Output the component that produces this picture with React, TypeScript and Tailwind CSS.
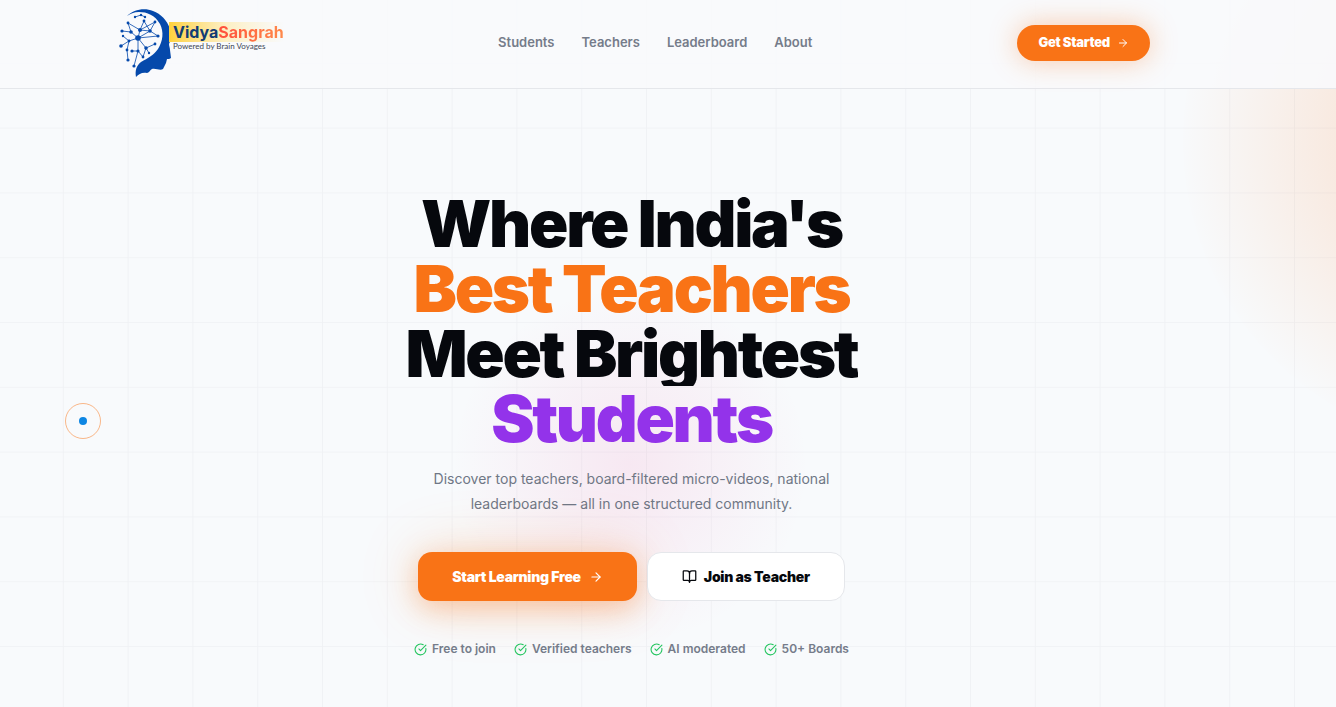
import { ArrowRight, BookOpen, CircleCheckBig } from 'lucide-react';

const navLinks = [
  { label: 'Students', href: '#students' },
  { label: 'Teachers', href: '#teachers' },
  { label: 'Leaderboard', href: '#leaderboard' },
  { label: 'About', href: '#about' },
];

const headline = [
  { text: "Where India's", color: 'text-[#06080d]' },
  { text: 'Best Teachers', color: 'text-[#f97316]' },
  { text: 'Meet Brightest', color: 'text-[#06080d]' },
  { text: 'Students', color: 'text-[#9333ea]' },
];

const perks = ['Free to join', 'Verified teachers', 'AI moderated', '50+ Boards'];

// circuit nodes inside the head: x, y, radius
const nodes = [
  [18, 10, 1.2], [24, 8, 1.2], [28, 10, 1.2], [11, 16, 1.4], [5, 24, 1.6], [14, 25, 1.8], [23, 23, 2],
  [27, 14, 1.4], [38, 15, 1.4], [33, 24, 1.8], [41, 29, 1.6], [21, 31, 2.8], [12, 34, 1.4],
  [6, 29, 1.2], [4, 39, 1.8], [10, 43, 1.4], [15, 44, 1.6], [21, 44, 1.6], [29, 41, 1.8],
  [38, 37, 1.4], [26, 50, 1.4], [17, 59, 1.6], [11, 53, 1.6], [32, 46, 1.2],
];

const links = [
  [0, 1], [1, 2], [3, 6], [3, 5], [4, 5], [5, 11], [6, 11], [6, 7], [6, 9], [7, 9], [8, 9], [9, 10],
  [9, 11], [11, 12], [12, 13], [12, 14], [11, 17], [11, 18], [18, 19], [10, 11], [15, 12], [16, 17],
  [17, 20], [17, 21], [15, 22], [18, 20], [18, 23], [6, 8],
];

function Logo() {
  return (
    <a href="#home" className="flex w-[180px] items-center pl-1" aria-label="VidyaSangrah home">
      <svg viewBox="0 0 56 72" className="h-[72px] w-14 shrink-0" aria-hidden="true">
        <path
          d="M10 9C16 3 27 0 36 4c8 3 14 9 17 18 2 6 1 11-1 15 0 2 1 4 1 6l1 8c-1 1-3 1-4 1l-1 4-1 2-2 4c-3 2-7-1-11 0-2 1-3 4-5 4-5-1-8 1-11 4-1-6 0-11 5-15 7-4 13-7 17-13 5-8 6-17 2-25C38 8 30 5 22 5c-5 0-9 2-12 4z"
          fill="#0549ab"
        />
        <g stroke="#0549ab" strokeWidth="0.8">
          {links.map(([a, b]) => (
            <line key={`${a}-${b}`} x1={nodes[a][0]} y1={nodes[a][1]} x2={nodes[b][0]} y2={nodes[b][1]} />
          ))}
        </g>
        <g fill="#0549ab">
          {nodes.map(([x, y, r]) => (
            <circle key={`${x}-${y}`} cx={x} cy={y} r={r} />
          ))}
        </g>
      </svg>
      <span className="-ml-1 flex flex-col pb-[14px]">
        <span className="bg-linear-to-r from-[#ffd23c] via-[#ffe9a0]/60 to-transparent pl-1 text-base/5 font-bold">
          <span className="text-[#123c74]">Vidya</span>
          <span className="bg-linear-to-r from-[#ff4b3a] to-[#ff8a4c] bg-clip-text text-transparent">Sangrah</span>
        </span>
        <span className="pl-1 font-['Lato',sans-serif] text-[8px]/[9px] text-[#3d4654]">Powered by Brain Voyages</span>
      </span>
    </a>
  );
}

function Header() {
  return (
    <header className="relative z-20 border-b border-[#e5e7eb] bg-[#f8fafc]/90 pr-[73px]">
      <div className="mx-auto flex h-[88px] max-w-[1037px] items-center justify-between pb-[2px]">
        <Logo />
        <nav className="flex gap-[27px] text-[13px] font-semibold text-[#757c8a]">
          {navLinks.map((link) => (
            <a key={link.label} href={link.href}>
              {link.label}
            </a>
          ))}
        </nav>
        <button className="flex h-9 items-center gap-[7px] rounded-full bg-[#f97316] px-[21px] text-[13px] font-black tracking-[-0.02em] text-white shadow-[0_0_28px_rgba(249,115,22,0.35)]">
          Get Started
          <ArrowRight size={12} />
        </button>
      </div>
    </header>
  );
}

function Backdrop() {
  return (
    <div className="pointer-events-none absolute inset-0 overflow-hidden" aria-hidden="true">
      <div className="absolute -top-[170px] -right-[467px] size-[620px] rounded-full bg-[radial-gradient(circle,rgba(249,115,22,0.24),transparent_72%)]" />
      <div className="absolute top-[285px] left-[450px] size-[360px] rounded-full bg-[radial-gradient(circle,rgba(236,72,153,0.1),transparent_70%)]" />
      <svg className="absolute inset-0 size-full">
        <defs>
          <pattern id="grid" width="72" height="72" patternUnits="userSpaceOnUse" patternTransform="scale(0.9)">
            <path d="M70 0h1v72h-1zM0 70h72v1H0z" fill="#0f172a" fillOpacity="0.04" />
          </pattern>
        </defs>
        <rect width="100%" height="100%" fill="url(#grid)" />
      </svg>
    </div>
  );
}

function Hero() {
  return (
    <main className="relative z-10 flex flex-col items-center pt-[102px] pr-[73px] pb-12 text-center">
      <h1 className="text-[65px]/[65px] font-black tracking-[-0.035em]">
        {headline.map((line) => (
          <span key={line.text} className={`block overflow-hidden ${line.color}`}>
            {line.text}
          </span>
        ))}
      </h1>
      <p className="mt-[15px] max-w-[432px] text-[14px]/[25px] text-[#6f7785]">
        Discover top teachers, board-filtered micro-videos, national leaderboards — all in one structured community.
      </p>
      <div className="mt-9 flex gap-[10px] text-sm font-black tracking-[-0.02em]">
        <button className="flex h-[49px] items-center gap-2 rounded-[14px] bg-[#f97316] px-[34px] text-white shadow-[0_7px_28px_rgba(249,115,22,0.35),0_0_64px_rgba(249,115,22,0.2)]">
          Start Learning Free
          <ArrowRight size={14} />
        </button>
        <button className="flex h-[49px] items-center gap-[7px] rounded-[14px] border border-[#e5e7eb] bg-white px-[34px] text-[#06080d]">
          <BookOpen size={15} />
          Join as Teacher
        </button>
      </div>
      <ul className="mt-10 flex gap-[18px] text-xs/4 font-semibold text-[#757c8a]">
        {perks.map((perk) => (
          <li key={perk} className="flex items-center gap-[5px]">
            <CircleCheckBig size={13} className="text-[#22c55e]" />
            {perk}
          </li>
        ))}
      </ul>
    </main>
  );
}

export default function App() {
  return (
    <div className="relative min-h-screen overflow-hidden bg-[#f8fafc] font-['Inter',sans-serif]">
      <Backdrop />
      <Header />
      <Hero />
      {/* Custom cursor */}
      <div className="pointer-events-none absolute top-[403px] left-[65px] z-30 flex size-9 items-center justify-center rounded-full border border-[#f97316]/50">
        <span className="size-2 rounded-full bg-[#0d86e3]" />
      </div>
    </div>
  );
}
